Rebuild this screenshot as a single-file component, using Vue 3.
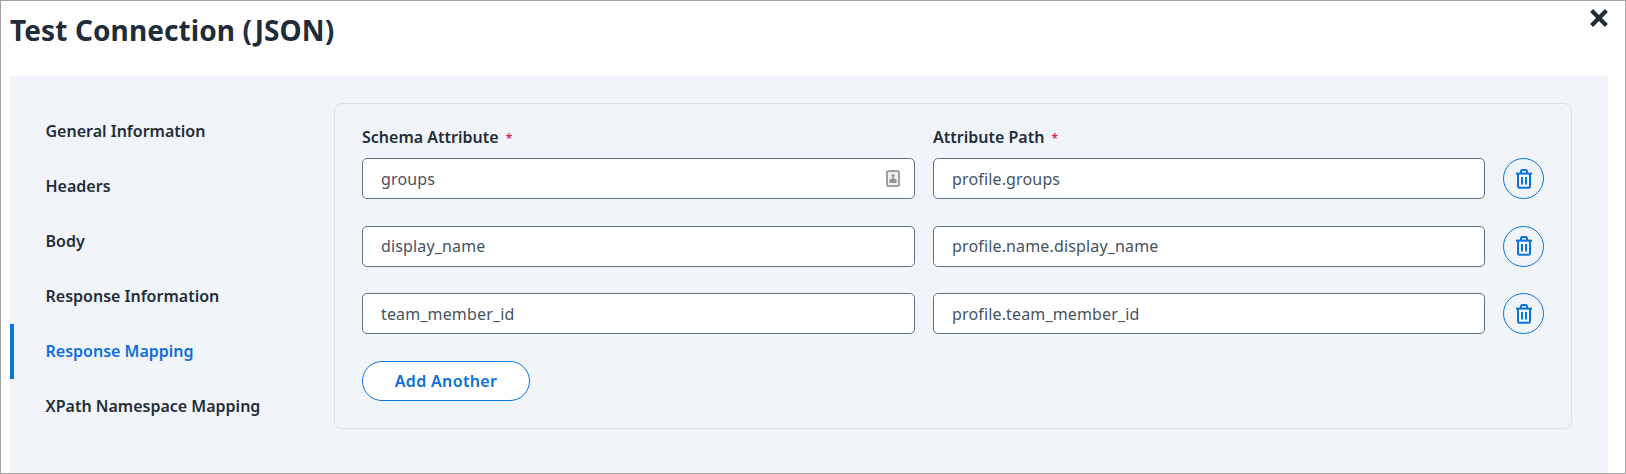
<script setup>
const nav = [
  { label: 'General Information' },
  { label: 'Headers' },
  { label: 'Body' },
  { label: 'Response Information' },
  { label: 'Response Mapping', active: true },
  { label: 'XPath Namespace Mapping' },
]
const rows = [
  { attr: 'groups', path: 'profile.groups', contact: true },
  { attr: 'display_name', path: 'profile.name.display_name' },
  { attr: 'team_member_id', path: 'profile.team_member_id' },
]
</script>

<template>
  <div class="dialog">
    <header class="head">
      <h1 class="title">Test Connection (JSON)</h1>
      <button class="close" aria-label="Close">
        <svg width="20" height="20" viewBox="0 0 20 20"><path d="M2.6 2.6 17.4 17.4M17.4 2.6 2.6 17.4" stroke="#1f2d3a" stroke-width="4.2" fill="none" /></svg>
      </button>
    </header>
    <div class="panel">
      <nav class="nav">
        <a v-for="n in nav" :key="n.label" class="nav-item" :class="{ active: n.active }">{{ n.label }}</a>
      </nav>
      <section class="card">
        <div class="grid labels">
          <div class="label">Schema Attribute <span class="star">*</span></div>
          <div class="label">Attribute Path <span class="star">*</span></div>
        </div>
        <div v-for="r in rows" :key="r.attr" class="grid row">
          <div class="field">
            <span>{{ r.attr }}</span>
            <svg v-if="r.contact" class="contact" width="14" height="17" viewBox="0 0 14 17">
              <rect x="1" y="1" width="12" height="15" rx="1.5" fill="#efefef" stroke="#a0a0a0" stroke-width="2" />
              <circle cx="7" cy="5.6" r="1.5" fill="#939393" />
              <path d="M5.8 7.4h2.4l.3 1.8H10.5V13H3.5V9.2h2z" fill="#939393" />
            </svg>
          </div>
          <div class="field"><span>{{ r.path }}</span></div>
          <button class="trash" aria-label="Delete">
            <svg width="18" height="20" viewBox="0 0 18 20" fill="none" stroke="#0a74da" stroke-width="2">
              <path d="M1 4.6H17" />
              <path d="M6 4.2V2.4C6 1.6 6.6 1 7.4 1h3.2c.8 0 1.4.6 1.4 1.4v1.8" />
              <path d="M3 4.6V17.4c0 .8.6 1.4 1.4 1.4h9.2c.8 0 1.4-.6 1.4-1.4V4.6" />
              <path d="M7 8V15.6M11 8V15.6" />
            </svg>
          </button>
        </div>
        <button class="add">Add Another</button>
      </section>
    </div>
  </div>
</template>

<style>
html, body { margin: 0; background: #fff; }
</style>

<style scoped>
.dialog {
  box-sizing: border-box;
  width: 1626px;
  height: 474px;
  border: 1px solid #a3a3a3;
  background: #fff;
  font-family: "Noto Sans", sans-serif;
  display: flex;
  flex-direction: column;
  padding-left: 9px;
  padding-right: 17px;
}
.head {
  height: 75px;
  flex: none;
  position: relative;
  margin-right: -17px;
}
.title {
  margin: 0;
  padding-top: 10px;
  font-size: 28px;
  line-height: 38px;
  font-weight: 700;
  letter-spacing: 0.1px;
  color: #1f2d3a;
}
.close {
  position: absolute;
  top: 7px;
  right: 16px;
  width: 20px;
  height: 20px;
  padding: 0;
  border: 0;
  background: none;
  display: flex;
}
.panel {
  flex: 1;
  background: #f1f5f9;
  display: flex;
  align-items: flex-start;
  padding-top: 27px;
  padding-right: 36px;
}
.nav {
  width: 324px;
  flex: none;
  display: flex;
  flex-direction: column;
  padding-top: 1px;
}
.nav-item {
  box-sizing: border-box;
  height: 55px;
  display: flex;
  align-items: center;
  padding-left: 35.5px;
  padding-bottom: 1px;
  font-size: 16px;
  font-weight: 600;
  color: #1f2d3a;
}
.nav-item.active {
  color: #0a6fdc;
  border-left: 4px solid #0a74da;
  padding-left: 31.5px;
}
.card {
  flex: 1;
  box-sizing: border-box;
  height: 326px;
  border: 1px solid #dbe0e6;
  border-radius: 8px;
  padding: 23px 27px 0;
}
.grid {
  display: grid;
  grid-template-columns: 553px 552px 41px;
  column-gap: 18px;
}
.labels {
  height: 31px;
}
.label {
  font-size: 16px;
  line-height: 21px;
  font-weight: 600;
  color: #1f2d3a;
}
.star {
  color: #e6174f;
  font-size: 12px;
  margin-left: 3px;
}
.row {
  height: 41px;
  margin-bottom: 26.5px;
}
.field {
  box-sizing: border-box;
  height: 41px;
  border: 1px solid #5f7186;
  border-radius: 5px;
  background: #fff;
  display: flex;
  align-items: center;
  justify-content: space-between;
  padding: 0 14px 0 18px;
  font-size: 16px;
  letter-spacing: 0.15px;
  color: #47535f;
}
.trash {
  width: 41px;
  height: 41px;
  padding: 0;
  border: 1px solid #0a74da;
  border-radius: 50%;
  background: transparent;
  display: flex;
  align-items: center;
  justify-content: center;
}
.add {
  display: block;
  box-sizing: border-box;
  width: 168px;
  height: 40px;
  margin-top: 0.5px;
  padding: 0;
  border: 1px solid #0a74da;
  border-radius: 20px;
  background: #fff;
  color: #0a6fdc;
  font-family: inherit;
  font-size: 16px;
  font-weight: 600;
  letter-spacing: 0.35px;
}
</style>
